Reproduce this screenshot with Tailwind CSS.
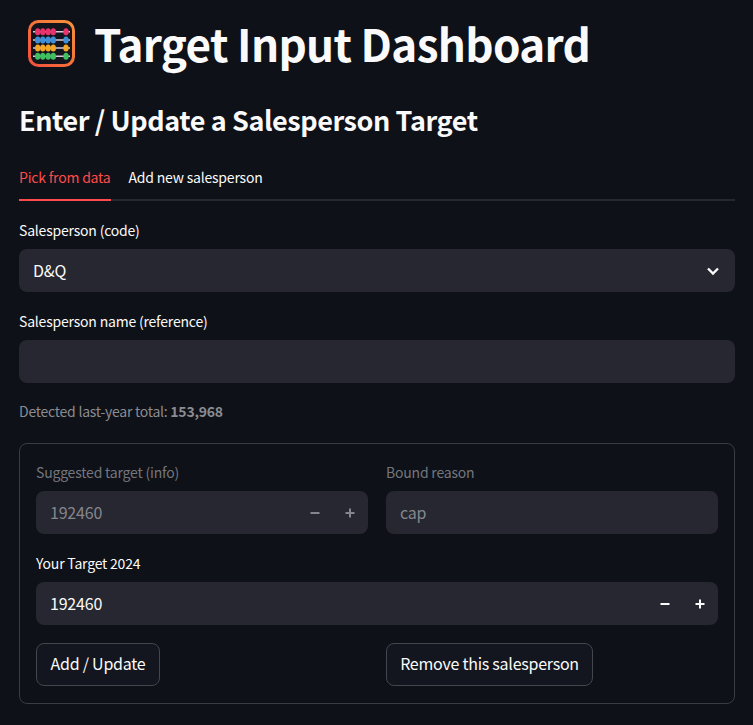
<!DOCTYPE html>
<html lang="en">
<head>
<meta charset="UTF-8">
<title>Target Input Dashboard</title>
<script src="https://cdn.jsdelivr.net/npm/@tailwindcss/browser@4"></script>
</head>
<body class="bg-[#0e1117] h-[725px] overflow-hidden text-[#fafafa] font-['Noto_Sans_CJK_SC','Liberation_Sans',sans-serif]">
  <div class="pl-[19px] pr-[18px]">
    <!-- title -->
    <div class="flex items-center h-[86px]">
      <svg class="w-[47px] h-[47px] ml-[9px] mr-[19px] shrink-0" viewBox="0 0 47 47">
        <defs>
          <linearGradient id="frame" x1="0" y1="1" x2="1" y2="0">
            <stop offset="0" stop-color="#f2503c"/>
            <stop offset="1" stop-color="#f7913a"/>
          </linearGradient>
        </defs>
        <rect x="1.500" y="1.500" width="44" height="44" rx="9" fill="#14151c" stroke="url(#frame)" stroke-width="3"/>
        <path d="M5 11.700h37M5 19.900h37M5 28h37M5 36.300h37" stroke="#d8c8d8" stroke-width="1.500"/>
        <g fill="#e8326c"><ellipse cx="9.700" cy="11.700" rx="2.700" ry="3.500"/><ellipse cx="14.800" cy="11.700" rx="2.700" ry="3.500"/><ellipse cx="20.200" cy="11.700" rx="2.700" ry="3.500"/><ellipse cx="25.300" cy="11.700" rx="2.700" ry="3.500"/><ellipse cx="38" cy="11.700" rx="2.700" ry="3.500"/></g>
        <g fill="#3f8fd8"><ellipse cx="9.700" cy="19.900" rx="2.700" ry="3.500"/><ellipse cx="14.800" cy="19.900" rx="2.700" ry="3.500"/><ellipse cx="20.200" cy="19.900" rx="2.700" ry="3.500"/><ellipse cx="25.300" cy="19.900" rx="2.700" ry="3.500"/><ellipse cx="38" cy="19.900" rx="2.700" ry="3.500"/></g>
        <g fill="#f5a623"><ellipse cx="9.700" cy="28" rx="2.700" ry="3.500"/><ellipse cx="14.800" cy="28" rx="2.700" ry="3.500"/><ellipse cx="20.200" cy="28" rx="2.700" ry="3.500"/><ellipse cx="25.300" cy="28" rx="2.700" ry="3.500"/><ellipse cx="38" cy="28" rx="2.700" ry="3.500"/></g>
        <g fill="#3fbf60"><ellipse cx="9.700" cy="36.300" rx="2.700" ry="3.500"/><ellipse cx="14.800" cy="36.300" rx="2.700" ry="3.500"/><ellipse cx="20.200" cy="36.300" rx="2.700" ry="3.500"/><ellipse cx="25.300" cy="36.300" rx="2.700" ry="3.500"/><ellipse cx="38" cy="36.300" rx="2.700" ry="3.500"/></g>
      </svg>
      <h1 class="text-[44px] font-bold leading-[56px] tracking-[-0.68px] whitespace-nowrap">Target Input Dashboard</h1>
    </div>
    <h2 class="text-[27px] font-semibold leading-[36px] tracking-[-0.42px] mt-[16px]">Enter / Update a Salesperson Target</h2>

    <!-- tabs -->
    <div class="flex gap-[18px] mt-[19px] h-[44px] border-b-2 border-[#262730] text-sm tracking-[-0.2px]">
      <div class="h-[44px] leading-[40px] border-b-2 border-[#ff4b4b] text-[#ff4b4b]">Pick from data</div>
      <div class="leading-[40px]">Add new salesperson</div>
    </div>

    <label class="block text-sm leading-[20px] tracking-[-0.2px] mt-[19px]">Salesperson (code)</label>
    <div class="mt-[9px] h-[43px] rounded-lg bg-[#262730] flex items-center justify-between px-[14px] text-base tracking-[-0.2px]">
      <span class="pb-[2px]">D&amp;Q</span>
      <svg class="w-[16px] h-[16px]" viewBox="0 0 16 16" fill="none" stroke="#fafafa" stroke-width="2.400"><path d="M3 5.500l5 5 5-5"/></svg>
    </div>

    <label class="block text-sm leading-[20px] tracking-[-0.2px] mt-[19px]">Salesperson name (reference)</label>
    <div class="mt-[9px] h-[43px] rounded-lg bg-[#262730]"></div>

    <p class="text-sm leading-[20px] tracking-[-0.25px] mt-[18px] text-[#8b8c91]">Detected last-year total: <b class="font-bold">153,968</b></p>

    <!-- form box -->
    <div class="mt-[22px] h-[261px] border border-[#3a3b44] rounded-lg px-[16px] pt-[18px]">
      <div class="grid grid-cols-2 gap-[18px]">
        <div>
          <label class="block text-sm leading-[20px] tracking-[-0.2px] text-[#74767e]">Suggested target (info)</label>
          <div class="mt-[9px] h-[43px] rounded-lg bg-[#262730] flex items-center pl-[14px] pr-[1px] text-base tracking-[-0.2px] text-[#85868d]">
            <span class="grow pb-[2px]">192460</span>
            <span class="w-[35px] flex justify-center"><svg class="w-[10px] h-[10px]" viewBox="0 0 10 10" stroke="#85868d" stroke-width="2"><path d="M0.500 5h9"/></svg></span>
            <span class="w-[35px] flex justify-center"><svg class="w-[10px] h-[10px]" viewBox="0 0 10 10" stroke="#85868d" stroke-width="2"><path d="M0.500 5h9M5 0.500v9"/></svg></span>
          </div>
        </div>
        <div>
          <label class="block text-sm leading-[20px] tracking-[-0.2px] text-[#74767e]">Bound reason</label>
          <div class="mt-[9px] h-[43px] rounded-lg bg-[#262730] flex items-center pl-[14px] text-base tracking-[-0.2px] text-[#85868d]"><span class="pb-[2px]">cap</span></div>
        </div>
      </div>
      <label class="block text-sm leading-[20px] tracking-[-0.2px] mt-[19px]">Your Target 2024</label>
      <div class="mt-[9px] h-[43px] rounded-lg bg-[#262730] flex items-center pl-[14px] pr-[1px] text-base tracking-[-0.2px]">
        <span class="grow pb-[2px]">192460</span>
        <span class="w-[35px] flex justify-center"><svg class="w-[10px] h-[10px]" viewBox="0 0 10 10" stroke="#fafafa" stroke-width="2"><path d="M0.500 5h9"/></svg></span>
        <span class="w-[35px] flex justify-center"><svg class="w-[10px] h-[10px]" viewBox="0 0 10 10" stroke="#fafafa" stroke-width="2"><path d="M0.500 5h9M5 0.500v9"/></svg></span>
      </div>
      <div class="grid grid-cols-2 gap-[18px] mt-[18px]">
        <div><button class="w-[124px] h-[43px] pb-[4px] rounded-lg bg-[#13161e] border border-[#44454e] text-base tracking-[-0.25px]">Add / Update</button></div>
        <div><button class="w-[207px] h-[43px] pb-[4px] rounded-lg bg-[#13161e] border border-[#44454e] text-base tracking-[-0.25px]">Remove this salesperson</button></div>
      </div>
    </div>
  </div>
</body>
</html>
